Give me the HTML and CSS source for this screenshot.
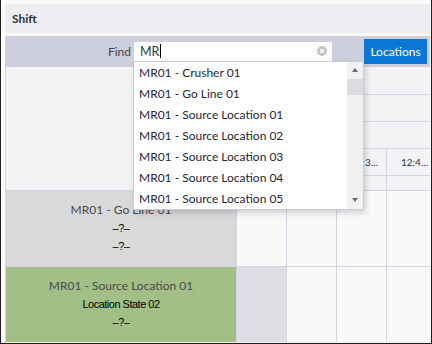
FILE: index.html
```html
<!DOCTYPE html>
<html lang="en">
<head>
    <meta charset="UTF-8">
    <title>Shift</title>
    <link rel="stylesheet" href="styles.css">
</head>
<body>

    <div class="window">
        <!-- Panel title -->
        <div class="title">Shift</div>

        <!-- Search toolbar -->
        <div class="toolbar">
            <label class="find-label">Find</label>
            <div class="search">
                <div class="search-box">
                    <span class="search-text">MR</span><span class="caret"></span>
                    <svg class="clear" width="10" height="10" viewBox="0 0 10 10">
                        <circle cx="5" cy="5" r="5" fill="#c3c3c6"/>
                        <path d="M3.2 3.2 L6.8 6.8 M6.8 3.2 L3.2 6.8" stroke="#fff" stroke-width="1.3"/>
                    </svg>
                </div>

                <!-- Suggestions dropdown -->
                <div class="dropdown">
                    <ul class="options">
                        <li>MR01 - Crusher 01</li>
                        <li>MR01 - Go Line 01</li>
                        <li>MR01 - Source Location 01</li>
                        <li>MR01 - Source Location 02</li>
                        <li>MR01 - Source Location 03</li>
                        <li>MR01 - Source Location 04</li>
                        <li>MR01 - Source Location 05</li>
                    </ul>
                    <div class="scrollbar">
                        <div class="arrow"><span class="tri up"></span></div>
                        <div class="thumb"></div>
                        <div class="track"></div>
                        <div class="arrow"><span class="tri down"></span></div>
                    </div>
                </div>
            </div>
            <button class="locations-btn">Locations</button>
        </div>

        <!-- Scheduler -->
        <div class="scheduler">
            <div class="sched-head">
                <div class="corner"></div>
                <div class="timeline-head">
                    <div class="band"></div>
                    <div class="band"></div>
                    <div class="band"></div>
                    <div class="band ticks">
                        <div class="tick">12:1...</div>
                        <div class="tick">12:2...</div>
                        <div class="tick">12:3...</div>
                        <div class="tick">12:4...</div>
                    </div>
                    <div class="band ticks minor">
                        <div class="tick"></div>
                        <div class="tick"></div>
                        <div class="tick"></div>
                        <div class="tick"></div>
                    </div>
                </div>
            </div>

            <div class="res-row">
                <div class="res-label idle">
                    <div class="res-name">MR01 - Go Line 01</div>
                    <div class="res-info">–?–</div>
                    <div class="res-info">–?–</div>
                </div>
                <div class="cell"></div>
                <div class="cell"></div>
                <div class="cell"></div>
                <div class="cell"></div>
            </div>

            <div class="res-row">
                <div class="res-label active">
                    <div class="res-name">MR01 - Source Location 01</div>
                    <div class="res-info">Location State 02</div>
                    <div class="res-info">–?–</div>
                </div>
                <div class="cell busy"></div>
                <div class="cell"></div>
                <div class="cell"></div>
                <div class="cell"></div>
            </div>
        </div>
    </div>

</body>
</html>
```

FILE: styles.css
```css
body {
    margin: 0;
    background-color: #fbfbfc;
    font-family: 'Lato', 'Noto Sans', sans-serif;
}
.window {
    width: 432px;
    height: 344px;
    box-sizing: border-box;
    border: 1px solid #1e1e1e;
    border-top: 0;
    padding: 4px 1px 0 4px;
    background-color: #fbfbfc;
    display: flex;
    flex-direction: column;
    overflow: hidden;
}
.title {
    height: 29px;
    flex-shrink: 0;
    background-color: #eeeef2;
    font-weight: bold;
    font-size: 12px;
    color: #333;
    padding-left: 7px;
    display: flex;
    align-items: center;
    margin-bottom: 3px;
}
/* Toolbar */
.toolbar {
    height: 31px;
    flex-shrink: 0;
    box-sizing: border-box;
    background-color: #cdd0dc;
    display: flex;
    align-items: center;
    padding: 0 3px 1px 0;
}
.find-label {
    flex: 1;
    text-align: right;
    margin-right: 3px;
    font-size: 12px;
    color: #444;
}
.search {
    position: relative;
    width: 198px;
    margin-right: 32px;
}
.search-box {
    height: 19px;
    background-color: #fff;
    display: flex;
    align-items: center;
    padding: 0 5px 0 6px;
    font-size: 12.5px;
    color: #333;
}
.caret {
    width: 1px;
    height: 14px;
    background-color: #000;
    margin-left: 1px;
}
.clear {
    margin-left: auto;
}
.locations-btn {
    width: 63px;
    height: 25px;
    padding: 0;
    border: 0;
    background-color: #0a78d4;
    color: #fff;
    font-family: 'Lato', 'Noto Sans', sans-serif;
    font-size: 12px;
}
/* Dropdown */
.dropdown {
    position: absolute;
    left: -1px;
    top: 19px;
    width: 231px;
    height: 149px;
    box-sizing: border-box;
    border: 1px solid #cbc9dc;
    background-color: #fff;
    box-shadow: 2px 3px 6px rgba(0, 0, 0, 0.16);
    display: flex;
    z-index: 10;
}
.options {
    list-style-type: none;
    margin: 0;
    padding: 0;
    flex: 1;
}
.options li {
    height: 21px;
    line-height: 21px;
    padding-left: 5px;
    font-size: 12px;
    color: #262637;
}
.scrollbar {
    width: 16px;
    background-color: #f1f1f3;
    display: flex;
    flex-direction: column;
}
.arrow {
    height: 17px;
    display: flex;
    align-items: center;
    justify-content: center;
}
.tri {
    width: 0;
    height: 0;
    border-left: 3.5px solid transparent;
    border-right: 3.5px solid transparent;
}
.tri.up {
    border-bottom: 4px solid #666;
}
.tri.down {
    border-top: 4px solid #666;
}
.thumb {
    height: 16px;
    background-color: #dcdbe1;
}
.track {
    flex: 1;
}
/* Scheduler */
.scheduler {
    flex: 1;
    border-left: 1px solid #d6d6dc;
    background-color: #f3f3f5;
    display: flex;
    flex-direction: column;
    overflow: hidden;
}
.sched-head {
    display: grid;
    grid-template-columns: 230px 1fr;
    height: 123px;
    flex-shrink: 0;
}
.timeline-head {
    display: flex;
    flex-direction: column;
}
.band {
    height: 27px;
    box-sizing: border-box;
}
.band + .band {
    border-top: 1px solid #d5d3e3;
}
.ticks {
    display: grid;
    grid-template-columns: 50px 50px 50px 1fr;
}
.ticks.minor {
    height: 15px;
}
.tick {
    border-left: 1px solid #d5d3e3;
    font-size: 10px;
    color: #333;
    padding-left: 14px;
    line-height: 26px;
    white-space: nowrap;
}
.res-row {
    display: grid;
    grid-template-columns: 230px 50px 50px 50px 1fr;
    height: 76px;
    flex-shrink: 0;
    box-sizing: border-box;
    border-top: 1px solid #d5d3e3;
}
.res-label {
    text-align: center;
    padding-top: 10px;
}
.res-label.idle {
    background-color: #d9d9d9;
}
.res-label.active {
    background-color: #a2bf87;
}
.res-name {
    font-size: 12px;
    color: #4a4a4a;
    line-height: 18px;
}
.res-info {
    font-family: 'Liberation Sans', sans-serif;
    font-size: 11px;
    letter-spacing: -0.5px;
    color: #000;
    line-height: 18px;
}
.cell {
    background-color: #f9f9fa;
    border-left: 1px solid #d5d3e3;
}
.cell.busy {
    background-color: #dfdee3;
}
```
